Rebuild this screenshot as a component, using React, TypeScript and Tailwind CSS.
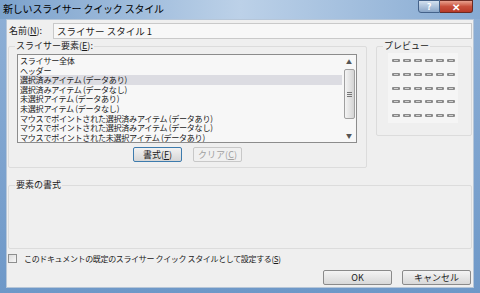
import React from 'react'

const items = [
    'スライサー全体',
    'ヘッダー',
    '選択済みアイテム (データあり)',
    '選択済みアイテム (データなし)',
    '未選択アイテム (データあり)',
    '未選択アイテム (データなし)',
    'マウスでポイントされた選択済みアイテム (データあり)',
    'マウスでポイントされた選択済みアイテム (データなし)',
    'マウスでポイントされた未選択アイテム (データあり)',
]

const font = { fontFamily: '"Noto Sans CJK JP", "Noto Sans", sans-serif' }

export default function App() {
    return (
        <div
            className="w-[480px] h-[293px] flex flex-col bg-gradient-to-b from-[#8fb0d6] to-[#6e98c8] text-[#1a1a1a] overflow-hidden"
            style={font}
        >
            {/* Title bar */}
            <div className="h-[19px] flex items-start bg-gradient-to-r from-[#7ca2cc] via-[#bcd1e8] to-[#86aad2]">
                <div className="pl-[3px] pt-[2px] text-[10px] leading-[14px] tracking-[-0.2px] text-black">新しいスライサー クイック スタイル</div>
                <div className="ml-auto mr-[7px] flex">
                    <div className="w-[22px] h-[13px] rounded-bl-[3px] border border-[#44628a] bg-gradient-to-b from-[#d2e0ef] to-[#8aa6c8] flex items-center justify-center text-[9px] leading-none font-bold text-white">?</div>
                    <div className="w-[33px] h-[13px] rounded-br-[3px] border border-l-0 border-[#6b2a22] bg-gradient-to-b from-[#e8a08e] via-[#c8503c] to-[#b83a28] flex items-center justify-center text-[10px] leading-none font-bold text-white">✕</div>
                </div>
            </div>

            {/* Client area */}
            <div className="mx-[6px] flex-1 bg-[#efefef] border border-[#b6c6d8] text-[9px] leading-[10px] flex flex-col">
                {/* Name row */}
                <div className="flex items-center mt-[2px] h-[17px]">
                    <span className="ml-[2px] w-[44px]">名前(<u>N</u>):</span>
                    <div className="flex-1 mr-[1px] h-[16px] bg-[#f7f7f7] border border-[#c9c9c9] flex items-center pl-[3px] text-[9.5px]">スライサー スタイル 1</div>
                </div>

                <div className="flex mt-[2px] h-[130px]">
                    {/* Slicer elements group */}
                    <fieldset className="ml-[1px] w-[359px] h-[127px] border border-[#dcdcdc] rounded-[2px] px-[8px]">
                        <legend className="px-[1px] ml-[-2px] text-[9px] leading-[10px]">スライサー要素(<u>E</u>):</legend>
                        <div className="mt-[3px] h-[89px] w-[340px] border border-[#8c8c8c] bg-[#f7f7f7] flex">
                            <div className="flex-1 flex flex-col pl-[2px] pt-[1px] text-[8.1px] leading-[9.6px] tracking-[-0.3px] overflow-hidden">
                                {items.map((t, i) => (
                                    <div key={t} className={`whitespace-nowrap ${i === 2 ? 'bg-[#dcdce2]' : ''}`}>{t}</div>
                                ))}
                            </div>
                            <div className="w-[14px] flex flex-col items-center">
                                <div className="h-[14px] text-[6px] leading-[14px] text-[#555]">▲</div>
                                <div className="w-[11px] h-[50px] rounded-[2px] border border-[#a0a0a0] bg-gradient-to-r from-[#f4f4f4] to-[#d4d4d4] flex items-center justify-center">
                                    <div className="flex flex-col gap-[1px]">
                                        <div className="w-[5px] h-px bg-[#777]" />
                                        <div className="w-[5px] h-px bg-[#777]" />
                                        <div className="w-[5px] h-px bg-[#777]" />
                                    </div>
                                </div>
                                <div className="mt-auto h-[12px] text-[6px] leading-[12px] text-[#555]">▼</div>
                            </div>
                        </div>
                        <div className="flex mt-[4px] ml-[116px] gap-[11px]">
                            <div className="w-[49px] h-[15px] rounded-[2px] border border-[#3d7bad] bg-gradient-to-b from-[#f2f2f2] to-[#d6d6d6] flex items-center justify-center">書式(<u>F</u>)</div>
                            <div className="w-[49px] h-[15px] rounded-[2px] border border-[#c8c8c8] bg-[#f0f0f0] flex items-center justify-center text-[#a0a0a0]">クリア(<u>C</u>)</div>
                        </div>
                    </fieldset>

                    {/* Preview group */}
                    <fieldset className="ml-[9px] w-[96px] h-[95px] border border-[#dcdcdc] rounded-[2px] px-[11px]">
                        <legend className="ml-[-5px] px-[1px] text-[9px] leading-[10px]">プレビュー</legend>
                        <div className="mt-[2px] w-[70px] h-[70px] bg-[#f5f5f5] flex flex-col justify-between py-[6px]">
                            {[0, 1, 2, 3, 4].map(r => (
                                <div key={r} className="flex justify-center gap-[3px]">
                                    {[0, 1, 2, 3, 4, 5].map(c => (
                                        <svg key={c} width="8" height="3" viewBox="0 0 8 3">
                                            <rect x="0" y="0" width="8" height="3" rx="1" fill="#8a8a8a" />
                                            <rect x="2" y="1" width="4" height="1" fill="#d0d0d0" />
                                        </svg>
                                    ))}
                                </div>
                            ))}
                        </div>
                    </fieldset>
                </div>

                {/* Element format group */}
                <fieldset className="mx-[1px] mt-[9px] h-[69px] border border-[#dcdcdc] rounded-[2px] px-[6px]">
                    <legend className="px-[1px] text-[9px] leading-[10px]">要素の書式</legend>
                </fieldset>

                {/* Checkbox */}
                <div className="flex items-center mt-[4px] ml-[1px] h-[11px]">
                    <div className="w-[9px] h-[9px] border border-[#8e8f8f] bg-gradient-to-br from-[#dcdcdc] to-[#f8f8f8]" />
                    <span className="ml-[7px] text-[8px] tracking-[-0.35px]">このドキュメントの既定のスライサー クイック スタイルとして設定する(<u>S</u>)</span>
                </div>

                {/* Buttons */}
                <div className="flex justify-end gap-[10px] mt-[6px] mr-[2px]">
                    <div className="w-[69px] h-[15px] rounded-[2px] border border-[#8a8a8a] bg-gradient-to-b from-[#f4f4f4] to-[#d8d8d8] flex items-center justify-center">OK</div>
                    <div className="w-[69px] h-[15px] rounded-[2px] border border-[#8a8a8a] bg-gradient-to-b from-[#f4f4f4] to-[#d8d8d8] flex items-center justify-center">キャンセル</div>
                </div>
            </div>
            <div className="h-[5px]" />
        </div>
    )
}
